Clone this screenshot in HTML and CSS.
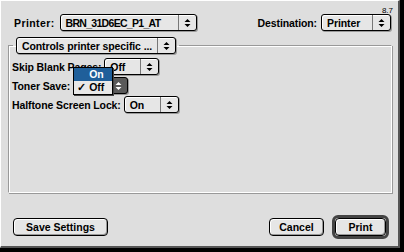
FILE: index.html
```html
<!DOCTYPE html>
<html lang="en">
<head>
    <meta charset="UTF-8">
    <title>Print</title>
    <link rel="stylesheet" href="styles.css">
</head>
<body>
    <div class="window">
        <div class="version">8.7</div>
        <div class="top-row">
            <div class="field">
                <span class="label label-printer">Printer:</span>
                <div class="popup popup-printer">
                    <span class="value tight">BRN_31D6EC_P1_AT</span>
                    <span class="arrows"><svg width="7" height="10" viewBox="0 0 7 10"><path d="M0.5 4 L3.5 1 L6.5 4 Z M0.5 6 L3.5 9 L6.5 6 Z" fill="currentColor"/></svg></span>
                </div>
            </div>
            <div class="field">
                <span class="label">Destination:</span>
                <div class="popup popup-dest">
                    <span class="value">Printer</span>
                    <span class="arrows"><svg width="7" height="10" viewBox="0 0 7 10"><path d="M0.5 4 L3.5 1 L6.5 4 Z M0.5 6 L3.5 9 L6.5 6 Z" fill="currentColor"/></svg></span>
                </div>
            </div>
        </div>

        <fieldset class="group">
            <legend>
                <div class="popup popup-panel">
                    <span class="value">Controls printer specific ...</span>
                    <span class="arrows"><svg width="7" height="10" viewBox="0 0 7 10"><path d="M0.5 4 L3.5 1 L6.5 4 Z M0.5 6 L3.5 9 L6.5 6 Z" fill="currentColor"/></svg></span>
                </div>
            </legend>
            <div class="row">
                <span class="label">Skip Blank Pages:</span>
                <div class="popup popup-small">
                    <span class="value">Off</span>
                    <span class="arrows"><svg width="7" height="10" viewBox="0 0 7 10"><path d="M0.5 4 L3.5 1 L6.5 4 Z M0.5 6 L3.5 9 L6.5 6 Z" fill="currentColor"/></svg></span>
                </div>
            </div>
            <div class="row">
                <span class="label">Toner Save:</span>
                <div class="popup-wrap">
                    <div class="popup popup-small popup-active">
                        <span class="value">Off</span>
                        <span class="arrows"><svg width="7" height="10" viewBox="0 0 7 10"><path d="M0.5 4 L3.5 1 L6.5 4 Z M0.5 6 L3.5 9 L6.5 6 Z" fill="currentColor"/></svg></span>
                    </div>
                    <div class="menu">
                        <div class="menu-item selected">On</div>
                        <div class="menu-item"><span class="check">&#10003;</span>Off</div>
                    </div>
                </div>
            </div>
            <div class="row">
                <span class="label">Halftone Screen Lock:</span>
                <div class="popup popup-small">
                    <span class="value">On</span>
                    <span class="arrows"><svg width="7" height="10" viewBox="0 0 7 10"><path d="M0.5 4 L3.5 1 L6.5 4 Z M0.5 6 L3.5 9 L6.5 6 Z" fill="currentColor"/></svg></span>
                </div>
            </div>
        </fieldset>

        <div class="buttons">
            <button class="btn btn-save">Save Settings</button>
            <div class="right-buttons">
                <button class="btn btn-cancel">Cancel</button>
                <div class="default-ring"><button class="btn btn-print">Print</button></div>
            </div>
        </div>
    </div>
</body>
</html>
```

FILE: styles.css
```css
body {
    margin: 0;
    background: #000;
    font-family: 'Liberation Sans', Arial, sans-serif;
    font-size: 10.5px;
    font-weight: bold;
    letter-spacing: -0.1px;
    color: #000;
}

.window {
    width: 397px;
    height: 245px;
    background: #dedede;
    border: 1px solid #fff;
    border-right: 2px solid #555;
    border-bottom: 2px solid #555;
    position: relative;
}

.version {
    position: absolute;
    top: 5px;
    right: 5px;
    font-size: 8px;
    font-weight: normal;
    letter-spacing: 0;
}

.top-row {
    display: flex;
    justify-content: space-between;
    align-items: center;
    padding: 13px 7px 0 13px;
}

.field {
    display: flex;
    align-items: center;
    gap: 4px;
}

.label {
    white-space: nowrap;
}

.label-printer {
    letter-spacing: 0.4px;
    margin-right: 1px;
}

.popup {
    display: flex;
    align-items: center;
    justify-content: space-between;
    height: 15px;
    border: 1px solid #000;
    border-radius: 3px;
    background: #e6e6e6;
    box-shadow: 1px 1px 0 #999, inset 1px 1px 0 #fff;
    padding-left: 5px;
    white-space: nowrap;
}

.value.tight {
    letter-spacing: -0.7px;
}

.popup .arrows {
    display: flex;
    align-items: center;
    justify-content: center;
    width: 17px;
    height: 15px;
    border-left: 1px solid #777;
}

.popup-printer { width: 130px; }
.popup-dest { width: 63px; }
.popup-panel { width: 153px; }
.popup-small { width: 48px; }

.popup-active {
    background: #5a5a5a;
    color: #fff;
    box-shadow: 1px 1px 0 #999;
}

.popup-active .arrows {
    border-left-color: #333;
}

.group {
    margin: 6px 6px 0 7px;
    height: 151px;
    border: 1px solid #999;
    border-right-color: #fff;
    border-bottom-color: #fff;
    box-shadow: 1px 1px 0 #999, inset 1px 1px 0 #fff;
    padding: 3px 3px 0 3px;
}

.group legend {
    padding: 0 3px;
    margin-left: 1px;
}

.row {
    display: flex;
    align-items: center;
    gap: 3px;
    height: 19px;
}

.popup-wrap {
    position: relative;
}

.menu {
    position: absolute;
    left: 0;
    top: -10px;
    width: 38px;
    background: #e8e8e8;
    border: 1px solid #000;
    box-shadow: 1px 1px 0 #444;
}

.menu-item {
    height: 13px;
    line-height: 13px;
    padding-left: 15px;
    position: relative;
}

.menu-item.selected {
    background: #1f5f9a;
    color: #fff;
}

.check {
    position: absolute;
    left: 3px;
}

.buttons {
    display: flex;
    justify-content: space-between;
    align-items: center;
    padding: 22px 9px 0 12px;
}

.right-buttons {
    display: flex;
    align-items: center;
    gap: 8px;
}

.btn {
    font-family: 'Liberation Sans', Arial, sans-serif;
    font-size: 10.5px;
    font-weight: bold;
    color: #000;
    height: 18px;
    border: 1px solid #000;
    border-radius: 4px;
    background: #e6e6e6;
    box-shadow: inset -1px -1px 0 #999, inset 1px 1px 0 #fff;
    padding: 0;
}

.btn-save { width: 95px; }
.btn-cancel { width: 55px; }
.btn-print { width: 51px; display: block; }

.default-ring {
    border: 3px solid #444;
    border-radius: 6px;
    background: #dedede;
}
```
